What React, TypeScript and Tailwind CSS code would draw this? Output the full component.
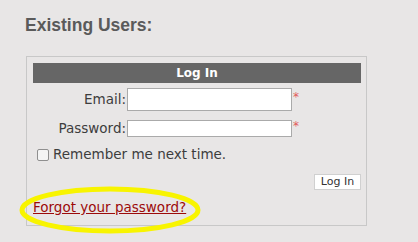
export default function App() {
  return (
    <div className="relative w-[418px] h-[242px] overflow-hidden bg-[#e8e6e6] pt-[13px] pl-[25px] font-['DejaVu_Sans',sans-serif]">
      <h2 className="font-['Liberation_Sans',Arial,sans-serif] font-bold text-[17.5px] leading-[24px] text-[#5a5a5a]">
        Existing Users:
      </h2>

      <div className="box-border ml-[1px] mt-[19px] w-[341px] h-[170px] border border-[#c8c8c8] pl-[6px] pr-[5px] pt-[6px] flex flex-col">
        {/* header bar */}
        <div className="h-[20px] bg-[#666666] text-white text-[12px] font-bold leading-[20px] text-center">
          Log In
        </div>

        {/* email */}
        <div className="mt-[5px] flex">
          <label className="w-[93px] text-right text-[13.5px] leading-[23px] text-[#3d3d3d]">Email:</label>
          <div className="ml-[1px] w-[165px] h-[23px] border border-[#aaaaaa] bg-white"></div>
          <span className="ml-[1px] text-[12px] leading-[12px] mt-[3px] text-[#e25b5b]">*</span>
        </div>

        {/* password */}
        <div className="mt-[9px] flex">
          <label className="w-[93px] text-right text-[13.5px] leading-[17px] text-[#3d3d3d]">Password:</label>
          <div className="ml-[1px] w-[165px] h-[17px] border border-[#aaaaaa] bg-white"></div>
          <span className="ml-[1px] text-[12px] leading-[12px] mt-[0px] text-[#e25b5b]">*</span>
        </div>

        {/* remember */}
        <div className="mt-[11px] h-[13px] flex items-center">
          <div className="ml-[4px] w-[12px] h-[12px] rounded-[2px] border border-[#8f8f8f] bg-[#f4f4f4]"></div>
          <span className="ml-[4px] text-[13.5px] leading-[13px] text-[#3d3d3d]">Remember me next time.</span>
        </div>

        {/* button */}
        <div className="mt-[13px] flex justify-end">
          <button className="box-border w-[47px] h-[16px] bg-white border border-[#d0d0d0] text-[11px] leading-[14px] text-[#333]">
            Log In
          </button>
        </div>

        {/* forgot */}
        <a className="mt-[9px] text-[13.5px] leading-[16px] text-[#9c0a0a] underline self-start">
          Forgot your password?
        </a>
      </div>

      {/* highlight annotation */}
      <svg className="absolute left-[18px] top-[185px]" width="186" height="50" viewBox="0 0 186 50">
        <ellipse cx="92" cy="25" rx="88" ry="21" fill="none" stroke="#f8f400" strokeWidth="5" />
      </svg>
    </div>
  );
}
